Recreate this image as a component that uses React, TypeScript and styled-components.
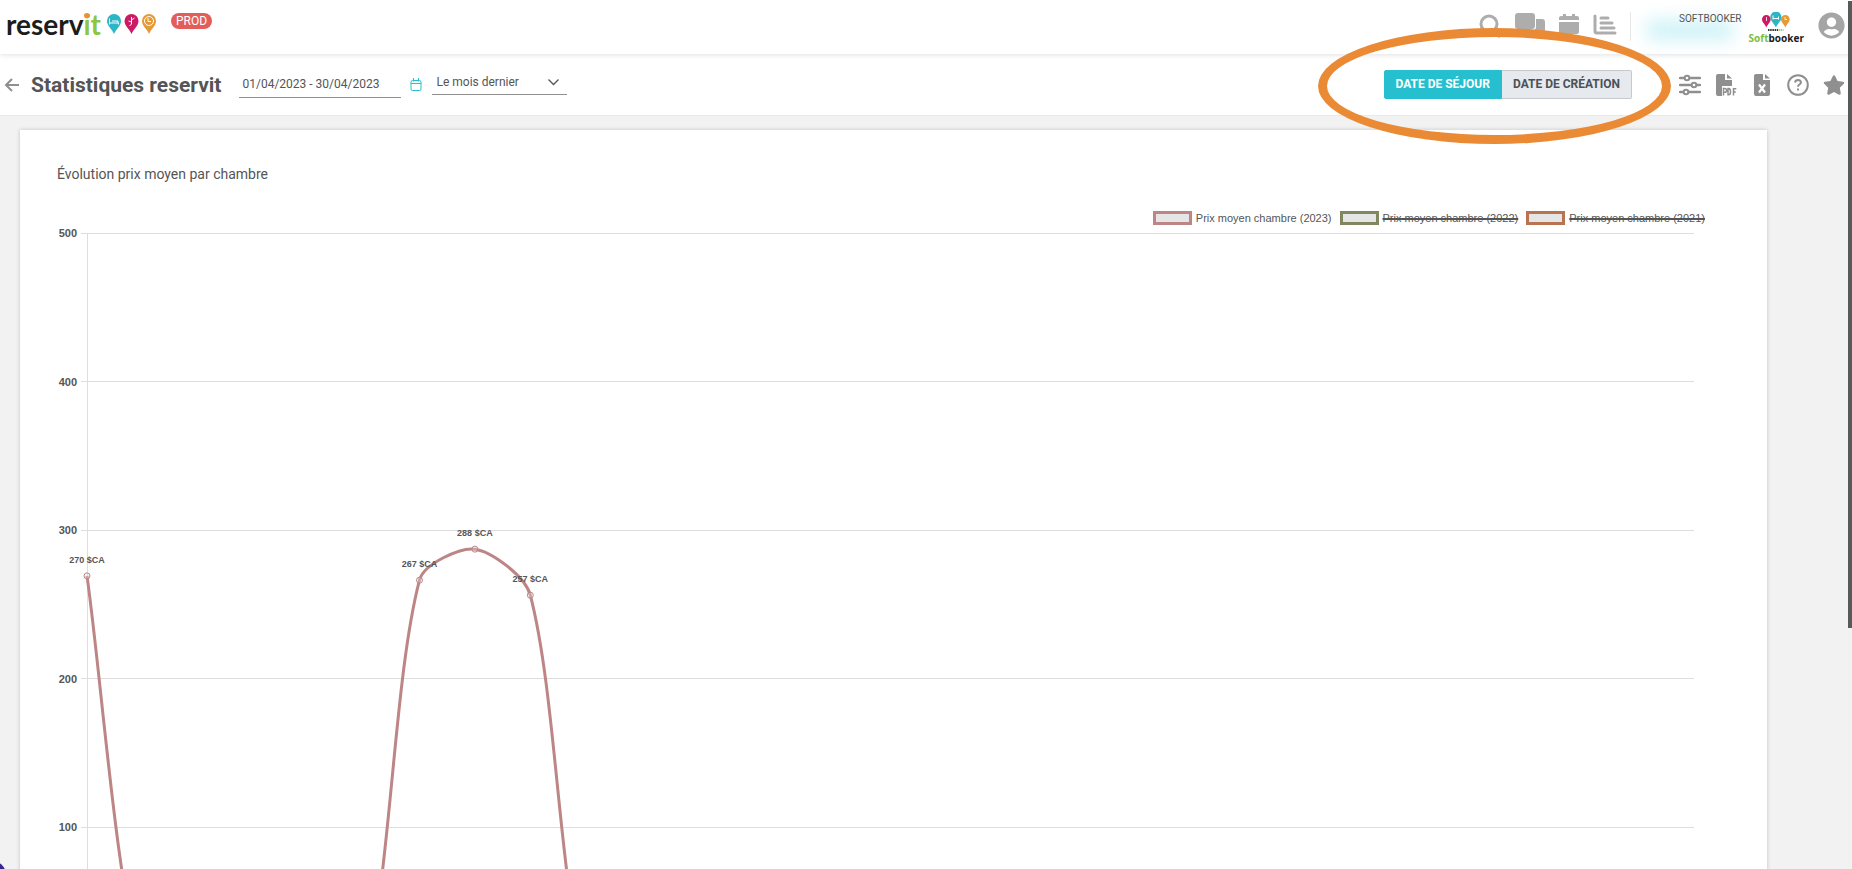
import React, { useEffect, useRef, useState } from "react";
import styled, { createGlobalStyle } from "styled-components";
import { FaStar, FaUserCircle } from "react-icons/fa";

const TEAL = "#25bfd0";
const GREY = "#8f8f8f";
const TEXT = "#555555";

const GlobalStyle = createGlobalStyle`
  * { box-sizing: border-box; }
  body {
    margin: 0;
    background: #f2f2f2;
    color: ${TEXT};
    font-family: Roboto, "Liberation Sans", sans-serif;
  }
`;

const Page = styled.div`
  position: relative;
  height: 100vh;
  overflow: hidden;
`;

const Header = styled.header`
  position: relative;
  z-index: 1;
  display: flex;
  align-items: flex-start;
  height: 54px;
  padding: 0 7px 0 6px;
  background: #fff;
  box-shadow: 0 1px 5px rgba(0, 0, 0, 0.12);
`;

const Brand = styled.a`
  display: flex;
  align-items: flex-start;
  color: #1c1c1c;
  text-decoration: none;
`;

const Wordmark = styled.span`
  position: relative;
  height: 34px;
  font: 700 28px/48px Lato, sans-serif;

  em {
    color: #8dc63f;
    font-style: normal;
  }
`;

const LogoDot = styled.i`
  position: absolute;
  top: 13px;
  right: 11px;
  width: 6px;
  height: 5px;
  border-radius: 50%;
  background: #e98f3a;
`;

const Pins = styled.svg`
  margin: 14px 0 0 6px;
`;

const EnvBadge = styled.span`
  margin: 13px 0 0 14px;
  padding: 0 5px;
  border-radius: 8px;
  background: #e35d5b;
  color: #fff;
  font-size: 12px;
  line-height: 16px;
`;

const HeaderTools = styled.nav`
  display: flex;
  align-items: flex-start;
  gap: 14px;
  margin-left: auto;
  padding-top: 12px;
`;

const IconButton = styled.button<{ $tone?: string }>`
  display: flex;
  padding: 0;
  border: 0;
  background: none;
  color: ${(p) => p.$tone ?? GREY};
  cursor: pointer;
`;

const Account = styled.div`
  position: relative;
  display: flex;
  align-items: flex-start;
  margin-left: -1px;
  height: 29px;
  padding-left: 48px;
  border-left: 1px solid #e6e6e6;
`;

const Redacted = styled.span`
  position: absolute;
  top: 8px;
  left: 16px;
  width: 86px;
  height: 20px;
  background: #cdf2f7;
  filter: blur(9px);
`;

const AccountName = styled.span`
  position: relative;
  font-size: 10px;
  line-height: 13px;
`;

const Partner = styled.span`
  display: flex;
  flex-direction: column;
  align-items: center;
  margin-left: 7px;
  color: #1c1c1c;
  font: 700 10px/12px "Noto Sans", sans-serif;

  em {
    color: #7ac043;
    font-style: normal;
  }
`;

const Toolbar = styled.div`
  display: flex;
  align-items: center;
  height: 62px;
  padding: 0 7px 0 4px;
  background: #fff;
  border-bottom: 1px solid #e9e9e9;
`;

const Title = styled.h1`
  margin: 0 18px 0 12px;
  font-size: 21px;
  line-height: 28px;
  font-weight: 700;
`;

const DateInput = styled.input`
  width: 162px;
  height: 26px;
  padding: 0 3px;
  border: 0;
  border-bottom: 1px solid ${GREY};
  background: none;
  color: ${TEXT};
  font: 400 12px/24px Roboto, sans-serif;
`;

const CalendarButton = styled(IconButton)`
  margin: 0 10px 0 9px;
`;

const PeriodField = styled.div`
  position: relative;
  margin-bottom: 4px;
`;

const PeriodSelect = styled.select`
  appearance: none;
  width: 135px;
  height: 24px;
  padding: 0 4px;
  border: 0;
  border-bottom: 1px solid ${GREY};
  border-radius: 0;
  background: none;
  color: ${TEXT};
  font: 400 12px/22px Roboto, sans-serif;
`;

const Chevron = styled.svg`
  position: absolute;
  top: 8px;
  right: 8px;
  pointer-events: none;
`;

const Toggle = styled.div`
  position: relative;
  display: flex;
  margin: 0 47px 0 auto;
`;

const ToggleButton = styled.button<{ $active?: boolean }>`
  height: 29px;
  padding: 0 11px;
  border: 1px solid ${(p) => (p.$active ? TEAL : "#c6cacd")};
  border-left-width: ${(p) => (p.$active ? "1px" : "0")};
  border-radius: ${(p) => (p.$active ? "2px 0 0 2px" : "0 2px 2px 0")};
  background: ${(p) => (p.$active ? TEAL : "#e6e9ed")};
  color: ${(p) => (p.$active ? "#fff" : "#4c5157")};
  font: 700 12px/27px Roboto, sans-serif;
  white-space: nowrap;
`;

const Highlight = styled.div`
  position: absolute;
  z-index: 2;
  top: -42px;
  right: -39px;
  width: 353px;
  height: 116px;
  border: 9px solid #eb8a35;
  border-radius: 50%;
  pointer-events: none;
`;

const Actions = styled.div`
  display: flex;
  gap: 14px;
`;

const Card = styled.main`
  margin: 14px 85px 0 20px;
  padding: 32px 37px;
  background: #fff;
  box-shadow: 0 0 4px rgba(0, 0, 0, 0.2);
`;

const CardTitle = styled.h2`
  margin: 0 0 25px;
  font-size: 14px;
  line-height: 24px;
  font-weight: 400;
`;

const Legend = styled.ul`
  display: flex;
  justify-content: flex-end;
  gap: 8px;
  margin: 0;
  padding: 0 25px 0 0;
  list-style: none;
`;

const LegendItem = styled.li<{ $off?: boolean }>`
  display: flex;
  align-items: center;
  gap: 4px;
  font-size: 11px;
  line-height: 14px;
  font-family: "Liberation Sans", sans-serif;
  text-decoration: ${(p) => (p.$off ? "line-through 2px" : "none")};
`;

const Swatch = styled.span<{ $color: string }>`
  width: 39px;
  height: 14px;
  border: 3px solid ${(p) => p.$color};
  background: #e5e5e5;
`;

const ChartArea = styled.div`
  height: 780px;

  svg {
    display: block;
  }
`;

const AxisText = styled.text`
  fill: ${TEXT};
  font: 700 11px "Liberation Sans", sans-serif;
`;

const PointText = styled.text`
  fill: ${TEXT};
  font: 700 9px "Liberation Sans", sans-serif;
`;

const ScrollThumb = styled.div`
  position: absolute;
  z-index: 3;
  top: 1px;
  right: 0;
  width: 4px;
  height: 627px;
  background: #58595b;
`;

const HelpBubble = styled.div`
  position: absolute;
  bottom: -28px;
  left: -31px;
  width: 38px;
  height: 38px;
  border-radius: 50%;
  background: #33288f;
`;

const PIN = "M7 20C5 15 0 12 0 7a7 7 0 0 1 14 0c0 5-5 8-7 13z";

function LogoPins() {
  return (
    <Pins width="50" height="20" viewBox="0 0 50 20" aria-hidden="true">
      <path d={PIN} fill="#2cb5c5" />
      <path d="M2.500 4.500v6M2.500 9h9v1.500M5 7h6v2" stroke="#fff" fill="none" />
      <g transform="translate(17.500 0)">
        <path d={PIN} fill="#cc1a64" />
        <path d="M7 3v7l-2 2M7 6l3-2M7 8l-3-1" stroke="#fff" fill="none" />
      </g>
      <g transform="translate(35 0)">
        <path d={PIN} fill="#e59a35" />
        <circle cx="7" cy="7" r="4.500" stroke="#fff" fill="none" />
        <path d="M6 4v3.500h3" stroke="#fff" fill="none" />
      </g>
    </Pins>
  );
}

function PartnerPins() {
  return (
    <svg width="28" height="20" viewBox="0 0 28 20" aria-hidden="true">
      <path transform="translate(0 3) scale(.62)" d={PIN} fill="#cc1a64" />
      <path transform="translate(19 3) scale(.62)" d={PIN} fill="#e59a35" />
      <path transform="translate(8.300 -.5) scale(.8)" d={PIN} fill="#2cb5c5" />
      <path d="M11 3.500v4M11 6.500h6M16.500 4.500v3" stroke="#fff" fill="none" />
      <path d="M4.500 5v4M23 5v2.500h2" stroke="#fff" strokeWidth=".8" fill="none" />
      <path d="M6 18h10" stroke="#333" strokeWidth="2" strokeDasharray="1.500 .7" />
      <path d="M16.500 18h5" stroke="#9ccc65" strokeWidth="2" strokeDasharray="1.500 .7" />
    </svg>
  );
}

type Pt = { x: number; y: number };

const VALUES = [269.1, 0, 0, 0, 0, 0, 266.2, 287.1, 256.1, ...Array(21).fill(0)] as number[];
const TICKS = [500, 400, 300, 200, 100];
const STEP = 148.5;
const TOP = 8;
const LEFT = 30;
const TENSION = 0.28;

function controls(prev: Pt, cur: Pt, next: Pt) {
  const a = Math.hypot(cur.x - prev.x, cur.y - prev.y);
  const b = Math.hypot(next.x - cur.x, next.y - cur.y);
  const fa = (TENSION * a) / (a + b);
  const fb = (TENSION * b) / (a + b);
  const dx = next.x - prev.x;
  const dy = next.y - prev.y;
  const floor = (y: number) => Math.min(y, TOP + 5 * STEP);
  return {
    before: { x: cur.x - fa * dx, y: floor(cur.y - fa * dy) },
    after: { x: cur.x + fb * dx, y: floor(cur.y + fb * dy) },
  };
}

function splinePath(pts: Pt[]) {
  const cs = pts.map((p, i) => controls(pts[i - 1] ?? p, p, pts[i + 1] ?? p));
  return pts.reduce(
    (d, p, i) =>
      i === 0
        ? `M${p.x} ${p.y}`
        : `${d}C${cs[i - 1].after.x} ${cs[i - 1].after.y} ${cs[i].before.x} ${cs[i].before.y} ${p.x} ${p.y}`,
    ""
  );
}

function PriceChart() {
  const ref = useRef<HTMLDivElement>(null);
  const [width, setWidth] = useState(1673);

  useEffect(() => {
    const el = ref.current;
    if (!el) return;
    const observer = new ResizeObserver(() => setWidth(el.clientWidth));
    observer.observe(el);
    return () => observer.disconnect();
  }, []);

  const right = width - 36;
  const pts = VALUES.map((v, i) => ({
    x: LEFT + (i * (right - LEFT)) / (VALUES.length - 1),
    y: TOP + ((500 - v) * STEP) / 100,
  }));

  return (
    <ChartArea ref={ref}>
      <svg width={width} height="780" role="img" aria-label="Évolution prix moyen par chambre">
        {TICKS.map((t, i) => (
          <g key={t}>
            <path
              d={`M${LEFT - 6} ${Math.floor(TOP + i * STEP) + 0.5}H${right}`}
              stroke="#dedede"
            />
            <AxisText x="20" y={TOP + i * STEP + 4} textAnchor="end">
              {t}
            </AxisText>
          </g>
        ))}
        <path d={`M${LEFT + 0.5} ${TOP}V${TOP + 5 * STEP}`} stroke="#dedede" />
        <path d={splinePath(pts)} stroke="#bd8586" strokeWidth="3" fill="none" />
        {pts.map((p, i) => (
          <g key={i}>
            <circle cx={p.x} cy={p.y} r="3" fill="rgba(229,229,229,.3)" stroke="#bd8586" />
            {VALUES[i] > 0 && (
              <PointText x={p.x} y={p.y - 13} textAnchor="middle">
                {Math.ceil(VALUES[i])} $CA
              </PointText>
            )}
          </g>
        ))}
      </svg>
    </ChartArea>
  );
}

export default function App() {
  const [mode, setMode] = useState("stay");
  return (
    <Page>
      <GlobalStyle />
      <Header>
        <Brand href="#">
          <Wordmark>
            reserv<em>it</em>
            <LogoDot />
          </Wordmark>
          <LogoPins />
        </Brand>
        <EnvBadge>PROD</EnvBadge>
        <HeaderTools>
          <IconButton $tone="#adadad" aria-label="Rechercher">
            <svg width="22" height="26" viewBox="0 0 22 26" fill="none" stroke="currentColor" strokeWidth="3">
              <circle cx="10" cy="12" r="8" />
              <path d="M15 18l6 7" />
            </svg>
          </IconButton>
          <IconButton $tone="#adadad" aria-label="Messages">
            <svg width="30" height="24" viewBox="0 0 30 24" fill="currentColor">
              <path d="M3 1h14a3 3 0 0 1 3 3v10a3 3 0 0 1-3 3H9l-4 4v-4H3a3 3 0 0 1-3-3V4a3 3 0 0 1 3-3z" />
              <path d="M21 7h6a3 3 0 0 1 3 3v8a3 3 0 0 1-3 3v3l-4-3H12v-3h6a3 3 0 0 0 3-3z" />
            </svg>
          </IconButton>
          <IconButton $tone="#adadad" aria-label="Calendrier">
            <svg width="20" height="24" viewBox="0 0 20 24" fill="currentColor">
              <path d="M4 2h3v2h6V2h3v2h2a2 2 0 0 1 2 2v2H0V6a2 2 0 0 1 2-2h2zM0 10h20v10a2 2 0 0 1-2 2H2a2 2 0 0 1-2-2z" />
            </svg>
          </IconButton>
          <IconButton $tone="#adadad" aria-label="Statistiques">
            <svg width="24" height="24" viewBox="0 0 24 24" fill="none" stroke="currentColor" strokeWidth="3" strokeLinecap="round">
              <path d="M2 4v15q0 2 2 2h18" />
              <path d="M8 6h7M8 11h11M8 16h13" />
            </svg>
          </IconButton>
          <Account>
            <Redacted />
            <AccountName>SOFTBOOKER</AccountName>
            <Partner>
              <PartnerPins />
              <span>
                <em>Soft</em>booker
              </span>
            </Partner>
          </Account>
          <IconButton $tone="#a5a5a5" aria-label="Mon compte">
            <FaUserCircle size={27} />
          </IconButton>
        </HeaderTools>
      </Header>

      <Toolbar>
        <IconButton aria-label="Retour">
          <svg width="15" height="14" viewBox="0 0 15 14" fill="none" stroke="currentColor" strokeWidth="2">
            <path d="M15 7H2M8 1L2 7l6 6" />
          </svg>
        </IconButton>
        <Title>Statistiques reservit</Title>
        <DateInput aria-label="Période" defaultValue="01/04/2023 - 30/04/2023" />
        <CalendarButton $tone={TEAL} aria-label="Choisir une date">
          <svg width="12" height="13" viewBox="0 0 12 13" fill="none" stroke="currentColor">
            <rect x="1" y="2.500" width="10" height="10" rx="1.500" />
            <path d="M1 5.500h10M3.500 0v3.500M8.500 0v3.500" />
          </svg>
        </CalendarButton>
        <PeriodField>
          <PeriodSelect aria-label="Plage">
            <option>Le mois dernier</option>
          </PeriodSelect>
          <Chevron width="11" height="7" viewBox="0 0 11 7" fill="none" stroke="#555" strokeWidth="1.300">
            <path d="M.5 .5l5 5 5-5" />
          </Chevron>
        </PeriodField>
        <Toggle>
          <ToggleButton $active={mode === "stay"} onClick={() => setMode("stay")}>
            DATE DE SÉJOUR
          </ToggleButton>
          <ToggleButton $active={mode === "creation"} onClick={() => setMode("creation")}>
            DATE DE CRÉATION
          </ToggleButton>
          <Highlight />
        </Toggle>
        <Actions>
          <IconButton aria-label="Filtres">
            <svg width="22" height="22" viewBox="0 0 22 22" fill="#fff" stroke="currentColor" strokeWidth="2">
              <path d="M1 4h20M1 11h20M1 18h20" strokeWidth="2.500" strokeLinecap="round" />
              <circle cx="8" cy="4" r="2.300" />
              <circle cx="15" cy="11" r="2.300" />
              <circle cx="7" cy="18" r="2.300" />
            </svg>
          </IconButton>
          <IconButton aria-label="Exporter en PDF">
            <svg width="22" height="22" viewBox="0 0 22 22" fill="currentColor">
              <path d="M3 0h7v6h7v6H7v10H3a2 2 0 0 1-2-2V2a2 2 0 0 1 2-2zM12 0L17 4.500h-5z" />
              <path d="M8.500 21.500v-7h1.200a1.700 1.700 0 0 1 0 3.800H8.500M13 14.500v6.300h.7q1.800 0 1.800-3.100t-1.800-3.200zM18.500 21.500v-6.800h2.800M18.500 18h2.300" fill="none" stroke="currentColor" strokeWidth="1.500" />
            </svg>
          </IconButton>
          <IconButton aria-label="Exporter en Excel">
            <svg width="22" height="22" viewBox="0 0 22 22" fill="currentColor">
              <path d="M5 0h7v6h7v14a2 2 0 0 1-2 2H5a2 2 0 0 1-2-2V2a2 2 0 0 1 2-2zM14 0L19 4.500h-5z" />
              <path d="M8 10.500l6 8M14 10.500l-6 8" stroke="#fff" strokeWidth="2.200" />
            </svg>
          </IconButton>
          <IconButton aria-label="Aide">
            <svg width="22" height="22" viewBox="0 0 22 22" fill="none" stroke="currentColor" strokeWidth="2">
              <circle cx="11" cy="11" r="9.800" />
              <path d="M8 8.500q.5-2.500 3-2.500t3 2.300q0 1.500-1.700 2.300-1.300.7-1.300 2.200" />
              <path d="M11 14.500v2" />
            </svg>
          </IconButton>
          <IconButton aria-label="Favoris">
            <FaStar size={22} />
          </IconButton>
        </Actions>
      </Toolbar>

      <Card>
        <CardTitle>Évolution prix moyen par chambre</CardTitle>
        <Legend>
          <LegendItem>
            <Swatch $color="#bd8586" />
            Prix moyen chambre (2023)
          </LegendItem>
          <LegendItem $off>
            <Swatch $color="#7f8660" />
            Prix moyen chambre (2022)
          </LegendItem>
          <LegendItem $off>
            <Swatch $color="#b87351" />
            Prix moyen chambre (2021)
          </LegendItem>
        </Legend>
        <PriceChart />
      </Card>
      <HelpBubble />
      <ScrollThumb />
    </Page>
  );
}
